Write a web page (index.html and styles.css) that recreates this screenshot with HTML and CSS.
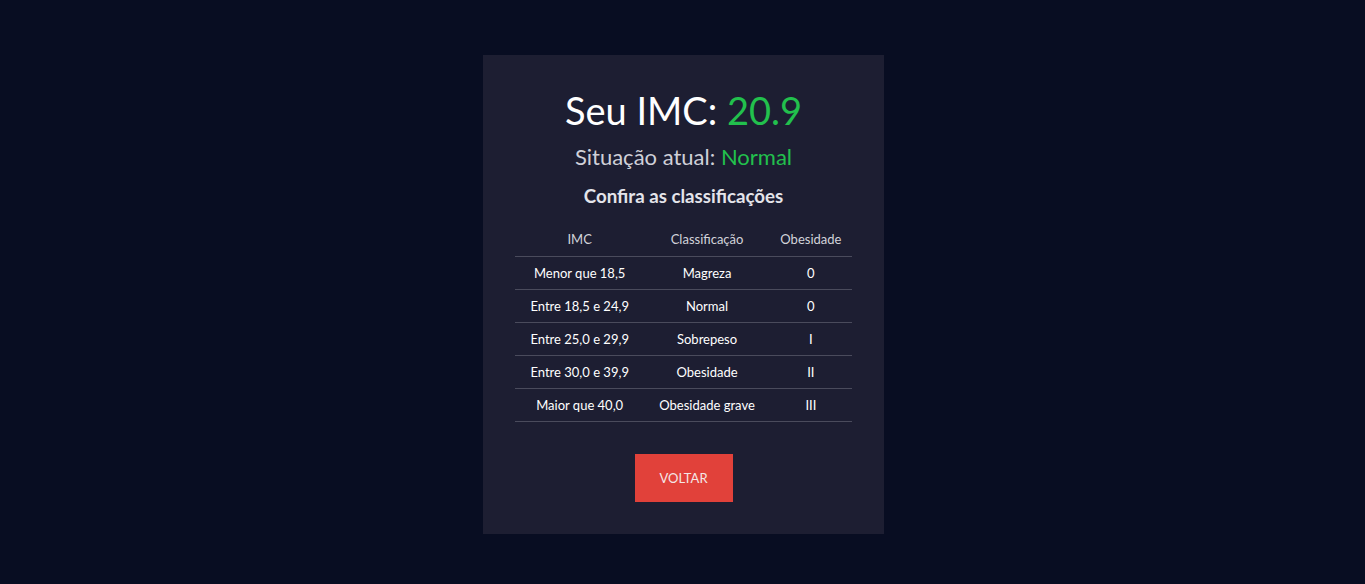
FILE: index.html
```html
<!DOCTYPE html>
<html lang="pt-BR">
<head>
<meta charset="utf-8">
<title>Resultado IMC</title>
<link rel="stylesheet" href="styles.css">
</head>
<body>
<main class="page">
  <section class="card">
    <h1 class="title">Seu IMC: <span class="accent">20.9</span></h1>
    <p class="status">Situação atual: <span class="accent">Normal</span></p>
    <h2 class="subtitle">Confira as classificações</h2>
    <table class="table">
      <thead>
        <tr><th>IMC</th><th>Classificação</th><th>Obesidade</th></tr>
      </thead>
      <tbody>
        <tr><td>Menor que 18,5</td><td>Magreza</td><td>0</td></tr>
        <tr><td>Entre 18,5 e 24,9</td><td>Normal</td><td>0</td></tr>
        <tr><td>Entre 25,0 e 29,9</td><td>Sobrepeso</td><td>I</td></tr>
        <tr><td>Entre 30,0 e 39,9</td><td>Obesidade</td><td>II</td></tr>
        <tr><td>Maior que 40,0</td><td>Obesidade grave</td><td>III</td></tr>
      </tbody>
    </table>
    <button class="btn" type="button">VOLTAR</button>
  </section>
</main>
</body>
</html>
```
FILE: styles.css
```css
* { box-sizing: border-box; }
html, body {
  margin: 0;
  padding: 0;
  background: #080d22;
  font-family: Lato, "Noto Sans", sans-serif;
  color: #ffffff;
}
.page {
  min-height: 584px;
  display: flex;
  justify-content: center;
  align-items: flex-start;
  padding-top: 55px;
  padding-left: 2px;
}
.card {
  width: 401px;
  background: #1d1e32;
  padding: 32px 32px;
  display: flex;
  flex-direction: column;
  align-items: center;
}
.title {
  margin: 0;
  font-size: 38px;
  font-weight: 400;
  line-height: 46px;
  color: #ffffff;
}
.accent { color: #22c04d; }
.status {
  margin: 11px 0 0;
  font-size: 22px;
  line-height: 25px;
  color: #cfd0d8;
}
.subtitle {
  margin: 16px 0 0;
  font-size: 18.7px;
  font-weight: 700;
  line-height: 22px;
  color: #e4e4ea;
}
.table {
  margin-top: 16px;
  width: 100%;
  border-collapse: collapse;
  font-size: 13px;
}
.table th {
  font-weight: 400;
  color: #d2d3da;
  height: 33px;
  padding: 0;
  border-bottom: 1px solid #4a4b5c;
  text-align: center;
}
.table td {
  color: #ffffff;
  height: 33px;
  padding: 0;
  border-bottom: 1px solid #4a4b5c;
  text-align: center;
}
.table th:nth-child(1), .table td:nth-child(1) { width: 129px; }
.table th:nth-child(2), .table td:nth-child(2) { width: 125px; }
.table th:nth-child(3), .table td:nth-child(3) { width: 82px; }
.btn {
  margin-top: 32px;
  width: 98px;
  height: 48px;
  border: none;
  background: #e1413a;
  color: #f4e6e6;
  font-family: Lato, "Noto Sans", sans-serif;
  font-size: 13px;
  font-weight: 400;
  cursor: pointer;
}
```
